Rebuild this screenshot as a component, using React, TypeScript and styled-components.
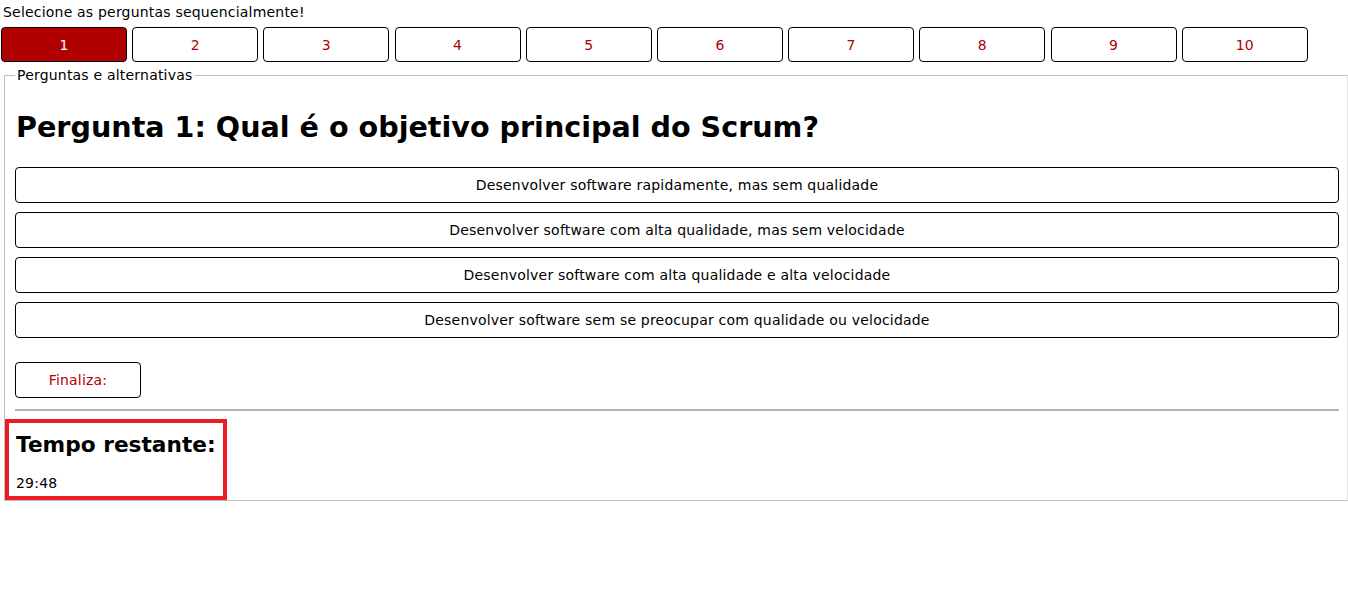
import React, {useState} from 'react';
import styled, {createGlobalStyle} from 'styled-components';

const GlobalStyle = createGlobalStyle`
  body {
    margin: 0;
    font-family: "DejaVu Sans", Verdana, sans-serif;
    font-size: 14px;
    letter-spacing: 0.2px;
    color: #000000;
    background: #ffffff;
    overflow: hidden;
  }
`;

const Page = styled.div`
  padding-top: 4px;
`;

const Hint = styled.div`
  padding-left: 3px;
  line-height: 16px;
`;

const NavRow = styled.div`
  display: flex;
  gap: 5.1px;
  margin: 7px 0 0 1px;
`;

const NavButton = styled.button<{ $active?: boolean }>`
  width: 126.1px;
  height: 35px;
  padding: 0;
  border: 1px solid #000000;
  border-radius: 4px;
  background: ${(p) => (p.$active ? '#b00000' : '#ffffff')};
  color: ${(p) => (p.$active ? '#ffffff' : '#b00000')};
  font-family: inherit;
  font-size: 14px;
  letter-spacing: 0.2px;
  cursor: pointer;
`;

const QuestionSet = styled.fieldset`
  box-sizing: border-box;
  width: 1344px;
  margin: 6px 0 0 4px;
  padding: 0;
  border: 1px solid #c0c0c0;
  border-right-color: #e4e4e4;
`;

const Legend = styled.legend`
  margin-left: 10px;
  padding: 0 2px;
  font-size: 14px;
  line-height: 14px;
`;

const Content = styled.div`
  padding: 0 8px 0 10px;
`;

const Title = styled.h2`
  margin: 28px 0 23px 1px;
  font-size: 28.6px;
  line-height: 34px;
  letter-spacing: 0;
  font-weight: bold;
`;

const Answers = styled.div`
  display: flex;
  flex-direction: column;
  gap: 9px;
`;

const AnswerButton = styled.button`
  height: 36px;
  padding: 0;
  border: 1px solid #000000;
  border-radius: 4px;
  background: #ffffff;
  color: #000000;
  font-family: inherit;
  font-size: 14px;
  letter-spacing: 0.2px;
  cursor: pointer;
`;

const FinishButton = styled(AnswerButton)`
  width: 126px;
  margin-top: 24px;
  color: #b00000;
`;

const Divider = styled.hr`
  margin: 11px 0 0;
  border: none;
  border-top: 2px solid #b4b4b4;
`;

const TimerBox = styled.div`
  box-sizing: border-box;
  width: 222px;
  height: 81px;
  margin-top: 8px;
  padding: 8px 7px;
  border: 4px solid #ec1c24;
`;

const TimerTitle = styled.h3`
  margin: 0;
  font-size: 21.7px;
  line-height: 28px;
  letter-spacing: 0;
  font-weight: bold;
  white-space: nowrap;
`;

const TimerValue = styled.div`
  margin-top: 16px;
  line-height: 16px;
`;

const answers = [
  'Desenvolver software rapidamente, mas sem qualidade',
  'Desenvolver software com alta qualidade, mas sem velocidade',
  'Desenvolver software com alta qualidade e alta velocidade',
  'Desenvolver software sem se preocupar com qualidade ou velocidade',
];

export default function App() {
  const [current, setCurrent] = useState(1);

  return (
    <Page>
      <GlobalStyle/>
      <Hint>Selecione as perguntas sequencialmente!</Hint>
      <NavRow>
        {Array.from({length: 10}, (_, i) => i + 1).map((n) =>
          <NavButton key={n} $active={n === current} onClick={() => setCurrent(n)}>{n}</NavButton>)}
      </NavRow>
      <QuestionSet>
        <Legend>Perguntas e alternativas</Legend>
        <Content>
          <Title>Pergunta {current}: Qual é o objetivo principal do Scrum?</Title>
          <Answers>
            {answers.map((a) => <AnswerButton key={a}>{a}</AnswerButton>)}
          </Answers>
          <FinishButton>Finaliza:</FinishButton>
          <Divider/>
        </Content>
        <TimerBox>
          <TimerTitle>Tempo restante:</TimerTitle>
          <TimerValue>29:48</TimerValue>
        </TimerBox>
      </QuestionSet>
    </Page>
  );
}
